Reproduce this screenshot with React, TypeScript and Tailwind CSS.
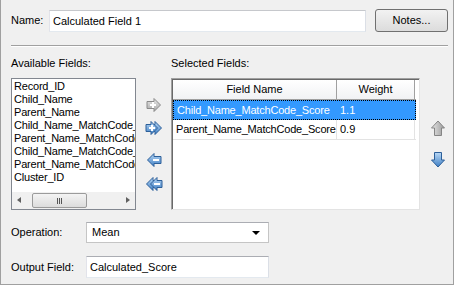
import React from "react";

const font = { fontFamily: '"Liberation Sans", Arial, sans-serif' };

function RightArrow({ double, color }: { double?: boolean; color: "gray" | "blue" }) {
  const id = `ra-${double ? "d" : "s"}-${color}`;
  const c1 = color === "gray" ? "#e8e8e8" : "#b9d8f5";
  const c2 = color === "gray" ? "#a8a8a8" : "#3f7fc4";
  const stroke = color === "gray" ? "#8a8a8a" : "#2c5f99";
  return (
    <svg width="18" height="14" viewBox="0 0 18 14">
      <defs>
        <linearGradient id={id} x1="0" y1="0" x2="0" y2="1">
          <stop offset="0" stopColor={c1} />
          <stop offset="1" stopColor={c2} />
        </linearGradient>
      </defs>
      {double ? (
        <>
          <polygon points="6,3.5 10,3.5 10,0.5 16.5,7 10,13.5 10,10.5 6,10.5" fill={`url(#${id})`} stroke={stroke} strokeWidth="1" />
          <polygon points="1,3.5 6,3.5 6,0.5 12.5,7 6,13.5 6,10.5 1,10.5" fill={`url(#${id})`} stroke={stroke} strokeWidth="1" />
        </>
      ) : (
        <polygon points="2,3.5 9,3.5 9,0.5 15.5,7 9,13.5 9,10.5 2,10.5" fill={`url(#${id})`} stroke={stroke} strokeWidth="1" />
      )}
      <rect x={double ? 4 : 5} y="6" width="6" height="2" fill="#fff" />
      <rect x={double ? 6 : 7} y="4" width="2" height="6" fill="#fff" />
    </svg>
  );
}

function LeftArrow({ double }: { double?: boolean }) {
  const id = `la-${double ? "d" : "s"}`;
  return (
    <svg width="18" height="14" viewBox="0 0 18 14">
      <defs>
        <linearGradient id={id} x1="0" y1="0" x2="0" y2="1">
          <stop offset="0" stopColor="#b9d8f5" />
          <stop offset="1" stopColor="#3f7fc4" />
        </linearGradient>
      </defs>
      {double ? (
        <>
          <polygon points="12,3.5 8,3.5 8,0.5 1.5,7 8,13.5 8,10.5 12,10.5" fill={`url(#${id})`} stroke="#2c5f99" />
          <polygon points="17,3.5 12,3.5 12,0.5 5.5,7 12,13.5 12,10.5 17,10.5" fill={`url(#${id})`} stroke="#2c5f99" />
          <rect x="9" y="6" width="6" height="2" fill="#fff" />
        </>
      ) : (
        <>
          <polygon points="16,3.5 9,3.5 9,0.5 2.5,7 9,13.5 9,10.5 16,10.5" fill={`url(#${id})`} stroke="#2c5f99" />
          <rect x="8" y="6" width="6" height="2" fill="#fff" />
        </>
      )}
    </svg>
  );
}

function UpArrow() {
  return (
    <svg width="14" height="16" viewBox="0 0 14 16">
      <defs>
        <linearGradient id="upg" x1="0" y1="0" x2="1" y2="0">
          <stop offset="0" stopColor="#e6e6e6" />
          <stop offset="1" stopColor="#9a9a9a" />
        </linearGradient>
      </defs>
      <polygon points="3.5,15.5 3.5,8 0.5,8 7,1 13.5,8 10.5,8 10.5,15.5" fill="url(#upg)" stroke="#858585" />
    </svg>
  );
}

function DownArrow() {
  return (
    <svg width="14" height="16" viewBox="0 0 14 16">
      <defs>
        <linearGradient id="dng" x1="0" y1="0" x2="0" y2="1">
          <stop offset="0" stopColor="#b9d8f5" />
          <stop offset="1" stopColor="#3f7fc4" />
        </linearGradient>
      </defs>
      <polygon points="3.5,0.5 3.5,8 0.5,8 7,15 13.5,8 10.5,8 10.5,0.5" fill="url(#dng)" stroke="#2c5f99" />
    </svg>
  );
}

const fields = [
  "Record_ID",
  "Child_Name",
  "Parent_Name",
  "Child_Name_MatchCode_Score",
  "Parent_Name_MatchCode_Score",
  "Child_Name_MatchCode_Score",
  "Parent_Name_MatchCode_Score",
  "Cluster_ID",
];

export default function App() {
  return (
    <div
      className="w-[454px] h-[285px] bg-[#f0f0f0] border-l border-r border-b border-[#a0a0a0] text-[11px] text-black flex flex-col overflow-hidden"
      style={font}
    >
      {/* Name row */}
      <div className="flex items-center mt-[9px] ml-[10px] h-[23px]">
        <span className="w-[38px]">Name:</span>
        <div className="w-[317px] h-[22px] bg-white border border-[#abadb3] border-t-[#c6c8cc] border-l-[#e2e3ea] border-b-[#e3e9ef] border-r-[#dbdfe6] flex items-center pl-[3px] mt-[1px]">
          Calculated Field 1
        </div>
        <div className="ml-[9px] w-[73px] h-[23px] rounded-[3px] border border-[#707070] bg-gradient-to-b from-[#f2f2f2] to-[#dcdcdc] flex items-center justify-center">
          Notes...
        </div>
      </div>

      {/* separator */}
      <div className="ml-[10px] w-[437px] mt-[13px] border-t border-[#a0a0a0] border-b border-b-white" />

      {/* labels */}
      <div className="flex mt-[10px] ml-[10px] h-[13px] items-center">
        <span className="w-[160px]">Available Fields:</span>
        <span>Selected Fields:</span>
      </div>

      {/* lists */}
      <div className="flex mt-[8px] ml-[10px] h-[132px]">
        {/* available list */}
        <div className="w-[125px] h-[132px] bg-white border border-[#828790] flex flex-col">
          <div className="flex-1 overflow-hidden pl-[2px] pt-[1px] leading-[13px] tracking-[-0.2px]">
            {fields.map((f, i) => (
              <div key={i} className="whitespace-nowrap h-[13px]">
                {f}
              </div>
            ))}
          </div>
          <div className="h-[17px] bg-[#f0f0f0] flex items-center relative">
            <span className="absolute left-[5px] top-[5px] w-0 h-0 border-t-[3.5px] border-b-[3.5px] border-r-[4px] border-t-transparent border-b-transparent border-r-[#606060]" />
            <div className="absolute left-[20px] top-[1px] w-[55px] h-[15px] rounded-[2px] border border-[#9b9b9b] bg-gradient-to-b from-[#f4f4f4] to-[#dcdcdc] flex items-center justify-center gap-[1px]">
              <span className="w-px h-[6px] bg-[#555]" />
              <span className="w-px h-[6px] bg-[#555]" />
              <span className="w-px h-[6px] bg-[#555]" />
            </div>
            <span className="absolute right-[5px] top-[5px] w-0 h-0 border-t-[3.5px] border-b-[3.5px] border-l-[4px] border-t-transparent border-b-transparent border-l-[#606060]" />
          </div>
        </div>

        {/* arrow buttons */}
        <div className="w-[35px] flex flex-col items-center pl-[1px] pt-[20px]">
          <RightArrow color="gray" />
          <div className="mt-[9px]">
            <RightArrow color="blue" double />
          </div>
          <div className="mt-[18px]">
            <LeftArrow />
          </div>
          <div className="mt-[10px]">
            <LeftArrow double />
          </div>
        </div>

        {/* selected table */}
        <div className="w-[249px] h-[132px] bg-white border border-t-[#a0a0a0] border-l-[#a0a0a0] border-r-[#e3e3e3] border-b-[#e3e3e3] flex flex-col">
          <div className="border-t border-l border-[#696969] flex-1 flex flex-col">
            <div className="flex h-[20px] border-b border-[#a0a0a0] w-[243px]">
              <div className="w-[164px] flex items-center justify-center border-r border-[#a0a0a0] bg-gradient-to-b from-white to-[#f1f2f4]">
                Field Name
              </div>
              <div className="w-[78px] flex items-center justify-center border-r border-[#a0a0a0] bg-gradient-to-b from-white to-[#f1f2f4]">
                Weight
              </div>
            </div>
            <div className="flex h-[20px] w-[243px] bg-[#3399ff] text-white border border-dotted border-black">
              <div className="w-[163px] flex items-center pl-[3px] border-r border-[#3399ff] tracking-[-0.2px]">
                Child_Name_MatchCode_Score
              </div>
              <div className="flex items-center pl-[3px]">1.1</div>
            </div>
            <div className="flex h-[20px] w-[243px] border-b border-[#e3e3e3]">
              <div className="w-[164px] flex items-center pl-[3px] border-r border-[#e3e3e3] whitespace-nowrap overflow-hidden tracking-[-0.2px]">
                Parent_Name_MatchCode_Score
              </div>
              <div className="w-[78px] flex items-center pl-[3px] border-r border-[#e3e3e3]">0.9</div>
            </div>
          </div>
        </div>

        {/* up/down */}
        <div className="ml-[11px] flex flex-col pt-[42px]">
          <UpArrow />
          <div className="mt-[16px]">
            <DownArrow />
          </div>
        </div>
      </div>

      {/* Operation */}
      <div className="flex items-center mt-[12px] ml-[10px] h-[21px]">
        <span className="w-[75px]">Operation:</span>
        <div className="w-[183px] h-[21px] bg-white border border-[#c5c5c5] border-t-[#abadb3] flex items-center pl-[5px] relative">
          Mean
          <span className="absolute right-[8px] top-[8px] w-0 h-0 border-l-[4px] border-r-[4px] border-t-[4px] border-l-transparent border-r-transparent border-t-black" />
        </div>
      </div>

      {/* Output */}
      <div className="flex items-center mt-[13px] ml-[10px] h-[22px]">
        <span className="w-[75px]">Output Field:</span>
        <div className="w-[183px] h-[22px] bg-white border border-[#abadb3] border-l-[#e2e3ea] border-b-[#e3e9ef] border-r-[#dbdfe6] flex items-center pl-[3px]">
          Calculated_Score
        </div>
      </div>
    </div>
  );
}
